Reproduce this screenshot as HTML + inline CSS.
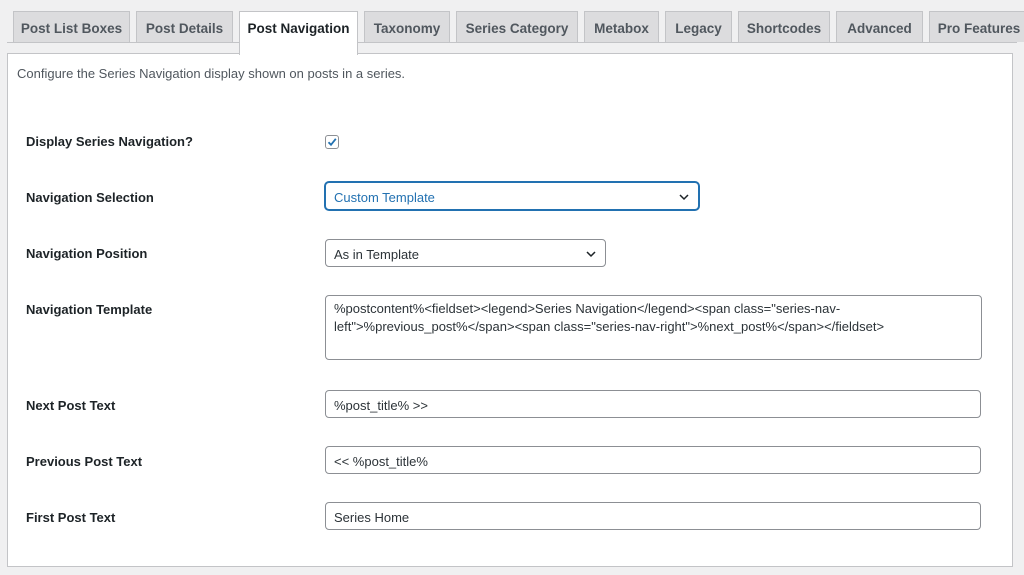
<!DOCTYPE html>
<html><head><style>
body{margin:0;width:1024px;height:575px;background:#f0f0f1;font-family:"Liberation Sans",sans-serif;color:#1d2327;overflow:hidden;position:relative}
.tab{position:absolute;top:11px;height:31px;background:#dcdcde;border:1px solid #c3c4c7;border-bottom:none;font-size:13.5px;font-weight:bold;color:#50575e;line-height:33px;text-align:center;box-sizing:border-box}
.tab.a{background:#fff;color:#1d2327;height:43px}
.line{position:absolute;top:42px;left:7px;width:1010px;border-top:1px solid #c3c4c7}
.panel{position:absolute;left:7px;top:53px;width:1004px;height:512px;background:#fff;border:1px solid #c3c4c7}
.desc{position:absolute;left:17px;top:66px;font-size:13px;color:#50575e}
.lbl{position:absolute;left:26px;font-size:13px;font-weight:bold}
.in{position:absolute;left:325px;box-sizing:border-box;border:1px solid #8c8f94;border-radius:4px;font-size:13px;padding:0 8px;background:#fff;color:#2c3338}
.sel{height:28px;line-height:29px}
.sel svg{position:absolute;right:8px;top:9px}
</style></head><body>
<div class="line"></div>
<div class="tab" style="left:13px;width:117px">Post List Boxes</div>
<div class="tab" style="left:136px;width:97px">Post Details</div>
<div class="tab" style="left:364px;width:86px">Taxonomy</div>
<div class="tab" style="left:456px;width:122px">Series Category</div>
<div class="tab" style="left:584px;width:75px">Metabox</div>
<div class="tab" style="left:665px;width:67px">Legacy</div>
<div class="tab" style="left:738px;width:92px">Shortcodes</div>
<div class="tab" style="left:836px;width:87px">Advanced</div>
<div class="tab" style="left:929px;width:100px">Pro Features</div>
<div class="panel"></div>
<div class="tab a" style="left:239px;width:119px;height:44px">Post Navigation</div>
<div class="desc">Configure the Series Navigation display shown on posts in a series.</div>
<div class="lbl" style="top:134px">Display Series Navigation?</div>
<div style="position:absolute;left:325px;top:135px;width:14px;height:14px;border:1px solid #8c8f94;border-radius:3px;box-sizing:border-box"><svg width="12" height="12" viewBox="0 0 12 12" style="position:absolute;left:0;top:0"><path d="M2.5 6.2 L5 8.8 L9.8 2.8" stroke="#2271b1" stroke-width="1.8" fill="none"/></svg></div>
<div class="lbl" style="top:190px">Navigation Selection</div>
<div class="in sel" style="top:182px;width:374px;border-color:#2271b1;box-shadow:0 0 0 1px #2271b1;color:#2271b1">Custom Template<svg width="12" height="10"><path d="M2 3 L6 7 L10 3" stroke="#1d2327" stroke-width="1.5" fill="none"/></svg></div>
<div class="lbl" style="top:246px">Navigation Position</div>
<div class="in sel" style="top:239px;width:281px">As in Template<svg width="12" height="10"><path d="M2 3 L6 7 L10 3" stroke="#1d2327" stroke-width="1.5" fill="none"/></svg></div>
<div class="lbl" style="top:302px">Navigation Template</div>
<div class="in" style="top:295px;width:657px;height:65px;padding:4px 8px;line-height:18px">%postcontent%&lt;fieldset&gt;&lt;legend&gt;Series Navigation&lt;/legend&gt;&lt;span class="series-nav-<br>left"&gt;%previous_post%&lt;/span&gt;&lt;span class="series-nav-right"&gt;%next_post%&lt;/span&gt;&lt;/fieldset&gt;</div>
<div class="lbl" style="top:398px">Next Post Text</div>
<div class="in sel" style="top:390px;width:656px">%post_title% &gt;&gt;</div>
<div class="lbl" style="top:454px">Previous Post Text</div>
<div class="in sel" style="top:446px;width:656px">&lt;&lt; %post_title%</div>
<div class="lbl" style="top:510px">First Post Text</div>
<div class="in sel" style="top:502px;width:656px">Series Home</div>
</body></html>
